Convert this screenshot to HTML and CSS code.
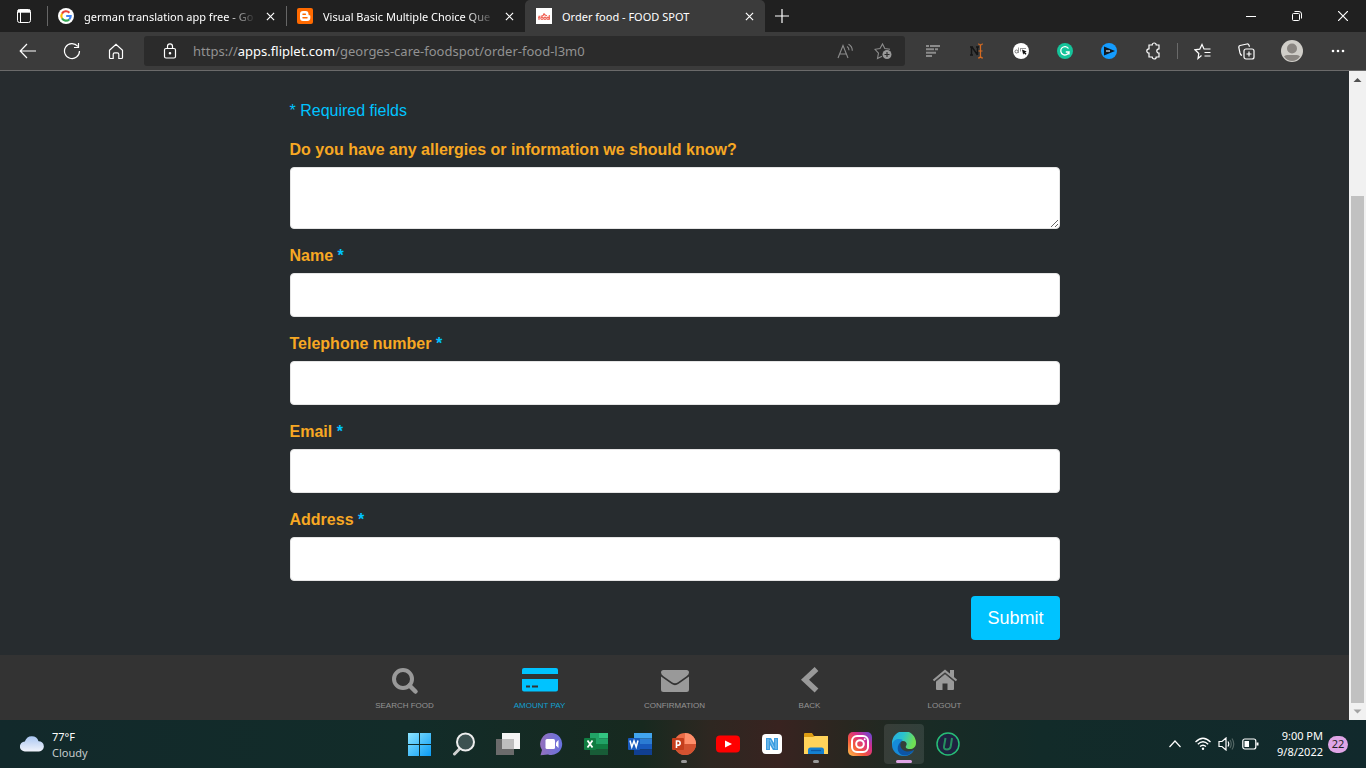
FILE: index.html
```html
<!DOCTYPE html>
<html lang="en">
<head>
<meta charset="utf-8">
<title>Order food - FOOD SPOT</title>
<meta name="viewport" content="width=device-width, initial-scale=1">
<link rel="stylesheet" href="styles.css">
</head>
<body>
<header class="browser">
  <div class="tabstrip">
    <button class="tab-menu" aria-label="Tab actions">
      <svg width="16" height="16" viewBox="0 0 16 16" fill="none" stroke="#fff"><rect x="1.5" y="1.5" width="13" height="13" rx="2"/><path d="M2 3.2h12" stroke-width="3"/><path d="M4.5 4v10"/></svg>
    </button>
    <div class="tab">
      <svg class="favicon" viewBox="0 0 16 16"><circle cx="8" cy="8" r="8" fill="#fff"/><g fill="none" stroke-width="2.1"><path d="M11.4 4.7A4.7 4.7 0 0 0 4 5.6" stroke="#ea4335"/><path d="M4 5.6a4.7 4.7 0 0 0 0 4.8" stroke="#fbbc05"/><path d="M4 10.4a4.7 4.7 0 0 0 7.2 1" stroke="#34a853"/><path d="M11.2 11.4A4.7 4.7 0 0 0 12.7 8H8.2" stroke="#4285f4"/></g></svg>
      <button class="tab-title fade">german translation app free - Go</button>
      <button class="tab-close" aria-label="Close tab"><svg width="9" height="9" viewBox="0 0 10 10"><path d="M1 1l8 8M9 1L1 9" stroke="#fff" stroke-width="1.3"/></svg></button>
    </div>
    <div class="tab">
      <svg class="favicon" viewBox="0 0 16 16"><rect width="16" height="16" rx="2" fill="#ff6a00"/><path d="M3 6a3 3 0 0 1 3-3h2.5a3 3 0 0 1 3 3c0 1 .3 1.200 1 1.200s.8.500.8 1V10a3 3 0 0 1-3 3H6a3 3 0 0 1-3-3z" fill="#fff"/><path d="M6 6.200h2.400M6 9.800h4" stroke="#ff6a00" stroke-width="1.500" stroke-linecap="round"/></svg>
      <button class="tab-title fade">Visual Basic Multiple Choice Que</button>
      <button class="tab-close" aria-label="Close tab"><svg width="9" height="9" viewBox="0 0 10 10"><path d="M1 1l8 8M9 1L1 9" stroke="#fff" stroke-width="1.3"/></svg></button>
    </div>
    <div class="tab active">
      <svg class="favicon" viewBox="0 0 16 16"><path fill="#fff" d="M0 0h16v16H0z"/><g fill="none" stroke="#ef5f52" stroke-width="1.100"><path d="M3 12V8.200h1.500M2 9.700h2.200"/><circle cx="6" cy="10.300" r="1.200"/><circle cx="9" cy="10.300" r="1.200"/><circle cx="12" cy="10.300" r="1.200"/><path d="M13.300 7v4.700M5 8.300q3-.3 3-3 .5 2 3 2.500"/></g></svg>
      <button class="tab-title">Order food - FOOD SPOT</button>
      <button class="tab-close" aria-label="Close tab"><svg width="9" height="9" viewBox="0 0 10 10"><path d="M1 1l8 8M9 1L1 9" stroke="#fff" stroke-width="1.3"/></svg></button>
    </div>
    <button class="new-tab" aria-label="New tab"><svg width="14" height="14" viewBox="0 0 14 14"><path d="M7 0v14M0 7h14" stroke="#fff" stroke-width="1.200"/></svg></button>
    <div class="window-controls">
      <button aria-label="Minimize"><svg width="10" height="10" viewBox="0 0 10 10"><path d="M0 5.500h10" stroke="#fff"/></svg></button>
      <button aria-label="Restore"><svg width="10" height="10" viewBox="0 0 10 10" fill="none" stroke="#fff"><rect x=".5" y="2.500" width="7" height="7" rx="1"/><path d="M2.500.5H7A2.500 2.500 0 0 1 9.500 3v4.500"/></svg></button>
      <button aria-label="Close"><svg width="10" height="10" viewBox="0 0 10 10"><path d="M0 0l10 10M10 0L0 10" stroke="#fff" stroke-width="1.200"/></svg></button>
    </div>
  </div>
  <div class="toolbar">
    <div class="tools">
      <button aria-label="Back"><svg width="18" height="16" viewBox="0 0 18 16" fill="none" stroke="#fff" stroke-width="1.200"><path d="M17 8H1.500M8 1L1.200 8 8 15"/></svg></button>
      <button aria-label="Refresh"><svg width="18" height="18" viewBox="0 0 18 18" fill="none" stroke="#fff" stroke-width="1.200"><path d="M16.500 9A7.500 7.500 0 1 1 14.800 4.300M15.500 1v4.500H11"/></svg></button>
      <button aria-label="Home"><svg width="16" height="17" viewBox="0 0 16 17" fill="none" stroke="#fff" stroke-width="1.200"><path d="M1.500 7.300L8 1.200l6.500 6.100v7.200a1 1 0 0 1-1 1h-2.700v-4.200a1.500 1.500 0 0 0-1.500-1.500H6.700a1.500 1.500 0 0 0-1.500 1.500v4.200H2.500a1 1 0 0 1-1-1z"/></svg></button>
    </div>
    <div class="address-bar">
      <svg width="14" height="16" viewBox="0 0 14 16" fill="none" stroke="#fff" stroke-width="1.200"><rect x="1.500" y="5.500" width="11" height="9.500" rx="1.500"/><path d="M4.500 5.500V3.300a2.500 2.500 0 0 1 5 0v2.200"/><circle cx="7" cy="10.200" r=".7" fill="#fff"/></svg>
      <div class="url" role="textbox" aria-label="Address and search bar" contenteditable="true" spellcheck="false">https://<b>apps.fliplet.com</b>/georges-care-foodspot/order-food-l3m0</div>
      <button aria-label="Read aloud"><svg width="17" height="16" viewBox="0 0 17 16" fill="none" stroke="#8c8c8c" stroke-width="1.100"><path d="M1 15L6 2.500 11 15M2.600 11h6.800M10 3.500q2 1.200 2 3.800M11.500 1.200q3.800 2 3.800 6.500"/></svg></button>
      <button aria-label="Add to favorites"><svg width="18" height="18" viewBox="0 0 18 18" fill="none" stroke="#8c8c8c" stroke-width="1.100"><path d="M8 14.200L3.500 16.500l1-5.300L1 7.300l5-.8L8.500 2l2.300 4.500 5.200.8"/><circle cx="13" cy="12.500" r="4.500" fill="#999" stroke="none"/><path d="M13 10v5M10.500 12.500h5" stroke="#2b2b2b"/></svg></button>
    </div>
    <div class="tools">
      <button aria-label="Reading list extension"><svg width="14" height="12" viewBox="0 0 14 12" stroke="#8b8b8b" stroke-width="2"><path d="M0 1h3M4 1h10M0 4.300h8M9 4.300h3M0 7.700h10M0 11h6"/></svg></button>
      <button aria-label="Text cursor extension"><svg width="16" height="16" viewBox="0 0 16 16" fill="none"><path d="M1 4h3M7 4h3M2.500 4v8M1 12h3M8.500 4v8M3 4l5.500 8" stroke="#151515" stroke-width="1.500"/><path d="M9 1q2.500 0 2.500 2v10q0 2-2.500 2M14 1q-2.500 0-2.500 2m0 10q0 2 2.500 2M9.500 8h4" stroke="#d56b22" stroke-width="1.200"/></svg></button>
      <button aria-label="Selection extension"><svg width="16" height="16" viewBox="0 0 16 16"><circle cx="8" cy="8" r="8" fill="#fff"/><circle cx="3.500" cy="8.500" r="1.500" fill="none" stroke="#777"/><path d="M5.500 4.500v5.500M7 5.500h6M7.500 5.500v3" stroke="#999"/><path d="M9 6.500l4.700 2-1.600.8 1.400 1.500-1 .9-1.500-1.500-.8 1.500z" fill="#111"/></svg></button>
      <button aria-label="Grammar extension"><svg width="16" height="16" viewBox="0 0 16 16" fill="none" stroke="#fff" stroke-width="1.300"><circle cx="8" cy="8" r="8" fill="#15c39a" stroke="none"/><path d="M11.500 5.500A4.200 4.200 0 1 0 12 9H8.800M12 9v2.500"/></svg></button>
      <button aria-label="Video extension"><svg width="16" height="16" viewBox="0 0 16 16"><circle cx="8" cy="8" r="8" fill="#149cff"/><path d="M3 3.500l11 4.500-11 4.500z" fill="#101820"/><path d="M5 7h4v2H5z" fill="#8995a2"/></svg></button>
      <button aria-label="Extensions"><svg width="16" height="18" viewBox="0 0 16 18" fill="none" stroke="#fff" stroke-width="1.200"><path d="M4 3h3.200a2 2 0 0 1 4 0H14v3.800a2.200 2.200 0 0 0 0 4.400V15h-2.800a2 2 0 0 1-4 0H4v-3.800a2.200 2.200 0 1 1 0-4.400z"/></svg></button>
    </div>
    <span class="divider"></span>
    <div class="tools">
      <button aria-label="Favorites"><svg width="17" height="17" viewBox="0 0 17 17" fill="none" stroke="#fff" stroke-width="1.200"><path d="M7.500 12.500L4 15.500l.8-5L1 6.800l4.800-.7L8 1.500l2 4.500h6.500M10.500 9.500h6M10.500 13h6"/></svg></button>
      <button aria-label="Collections"><svg width="17" height="17" viewBox="0 0 17 17" fill="none" stroke="#fff" stroke-width="1.200"><rect x="6" y="6" width="10" height="10" rx="2"/><path d="M11 8.500v5M8.500 11h5M4 12.500Q2.500 12 2 10L.8 4.500Q.6 3 2 2.500L9 1q1.500-.2 2 1.200l.5 1.600"/></svg></button>
    </div>
    <div class="tools profile">
      <button aria-label="Profile"><svg width="22" height="22" viewBox="0 0 22 22"><circle cx="11" cy="11" r="11" fill="#d0cec9"/><circle cx="11" cy="8.500" r="5" fill="#8a8682"/><path d="M3 16.500q1-1.500 3-1.500h10q2 0 3 1.500a9.500 9.500 0 0 1-16 0z" fill="#8a8682"/></svg></button>
      <button aria-label="Settings and more"><svg width="14" height="4" viewBox="0 0 14 4" fill="#fff"><circle cx="2" cy="2" r="1.300"/><circle cx="7" cy="2" r="1.300"/><circle cx="12" cy="2" r="1.300"/></svg></button>
    </div>
  </div>
</header>

<div class="viewport">
  <div class="app">
    <main class="content">
      <form class="order-form">
        <p class="required-note">* Required fields</p>
        <div class="field"><label for="allergies">Do you have any allergies or information we should know?</label><textarea id="allergies"></textarea></div>
        <div class="field"><label for="name">Name <span class="star">*</span></label><input id="name" type="text" required></div>
        <div class="field"><label for="phone">Telephone number <span class="star">*</span></label><input id="phone" type="tel" required></div>
        <div class="field"><label for="email">Email <span class="star">*</span></label><input id="email" type="email" required></div>
        <div class="field"><label for="address">Address <span class="star">*</span></label><input id="address" type="text" required></div>
        <button class="submit" type="submit">Submit</button>
      </form>
    </main>
    <nav class="bottom-nav">
      <a href="#search"><svg width="28" height="28" viewBox="0 0 28 28" fill="none" stroke="currentColor"><circle cx="12" cy="12" r="9" stroke-width="4"/><path d="M18.500 18.500l6 6" stroke-width="4.500" stroke-linecap="round"/></svg><span>SEARCH FOOD</span></a>
      <a href="#pay" class="current"><svg width="36" height="28" viewBox="0 0 36 28" fill="currentColor"><path d="M2 1h32a2 2 0 0 1 2 2v4H0V3a2 2 0 0 1 2-2zM0 12h36v10.500a2 2 0 0 1-2 2H2a2 2 0 0 1-2-2z"/><path d="M4 19.500h4M10 19.500h6" stroke="#333" stroke-width="2"/></svg><span>AMOUNT PAY</span></a>
      <a href="#confirmation"><svg width="28" height="28" viewBox="0 0 28 28" fill="currentColor"><path d="M2.500 3h23A2.500 2.500 0 0 1 28 5.500q0 2-2.500 3.700l-8.500 6q-3 2.200-6 0l-8.500-6Q0 7.500 0 5.500A2.500 2.500 0 0 1 2.500 3z"/><path d="M0 9.500l10.300 7.300q3.700 2.700 7.400 0L28 9.500v13a2.500 2.500 0 0 1-2.500 2.500h-23A2.500 2.500 0 0 1 0 22.500z"/></svg><span>CONFIRMATION</span></a>
      <a href="#back"><svg width="28" height="28" viewBox="0 0 28 28" fill="none" stroke="currentColor" stroke-width="5.500" stroke-linejoin="miter"><path d="M20.500 2L9 12.700 20.500 23.500"/></svg><span>BACK</span></a>
      <a href="#logout"><svg width="28" height="28" viewBox="0 0 28 28" fill="currentColor"><path d="M14 6.500l9 7.500v8a1 1 0 0 1-1 1h-5.500v-6.500h-5V23H6a1 1 0 0 1-1-1v-8z"/><path d="M2.500 13.500L14 4l11.500 9.500" fill="none" stroke="currentColor" stroke-width="2.200"/><path d="M19 3h4v9l-4-3.500z"/><path d="M5 14.200l9-7.400 9 7.400" fill="none" stroke="#333" stroke-width=".8"/></svg><span>LOGOUT</span></a>
    </nav>
  </div>
  <div class="scrollbar" aria-hidden="true">
    <svg width="17" height="17" viewBox="0 0 17 17"><path d="M4.500 11L8.500 7l4 4z" fill="#505050"/></svg>
    <div class="track"><div class="thumb"></div></div>
    <svg width="17" height="17" viewBox="0 0 17 17"><path d="M4.500 6.500h8l-4 4z" fill="#a3a3a3"/></svg>
  </div>
</div>

<footer class="taskbar">
  <button class="weather">
    <svg width="24" height="16" viewBox="0 0 24 16"><defs><linearGradient id="cloud" x2="0" y2="1"><stop stop-color="#a9c6f2"/><stop offset="1" stop-color="#f0f3fb"/></linearGradient></defs><path d="M5 15.500a5 5 0 0 1-.2-10Q7 0 12 .3q5 0 6.500 5a5.100 5.100 0 0 1 .5 10.200z" fill="url(#cloud)"/></svg>
    <span class="weather-text"><span>77°F</span><span class="sky">Cloudy</span></span>
  </button>
  <div class="apps">
    <button aria-label="Start"><svg width="24" height="24" viewBox="0 0 24 24"><defs><linearGradient id="win" x2="1" y2="1"><stop stop-color="#8ce4ff"/><stop offset="1" stop-color="#0a9cf5"/></linearGradient></defs><path d="M0 1h11v11H0zm12 0h11v11H12zM0 13h11v11H0zm12 0h11v11H12z" fill="url(#win)"/></svg></button>
    <button aria-label="Search"><svg width="24" height="24" viewBox="0 0 24 24" fill="none" stroke="#eee" stroke-linecap="round"><path d="M7.500 17L2.500 22" stroke-width="3" stroke="#d0d0d0"/><circle cx="13.500" cy="10" r="8.500" stroke-width="2" fill="#3c5150"/></svg></button>
    <button aria-label="Task view"><svg width="24" height="24" viewBox="0 0 24 24"><path d="M0 7h18v16H0z" fill="#6b6b6b"/><path d="M6 1h18v16H6z" fill="#f4f4f4"/><path d="M6 7h12v10H6z" fill="#bdbdbd"/></svg></button>
    <button aria-label="Chat"><svg width="24" height="24" viewBox="0 0 24 24"><defs><linearGradient id="chat" x2="1"><stop stop-color="#9370bd"/><stop offset="1" stop-color="#6872df"/></linearGradient></defs><path d="M12 1A11 11 0 1 1 8 22.500L.500 23.200 2 18A11 11 0 0 1 12 1z" fill="url(#chat)"/><rect x="5.500" y="7" width="9.500" height="10" rx="1.500" fill="#fff"/><path d="M16 10.500L18.500 8v8L16 13.500z" fill="#fff"/></svg></button>
    <button aria-label="Excel"><svg width="24" height="24" viewBox="0 0 24 24"><path d="M6 1h9v11H6z" fill="#21a366"/><path d="M15 1h9v5.500h-9z" fill="#33c481"/><path d="M15 6.500h9V12h-9z" fill="#21a366"/><path d="M6 12h9v5H6z" fill="#107c41"/><path d="M15 12h9v5h-9z" fill="#107c41"/><path d="M6 17h18v6H6z" fill="#185c37"/><rect y="6" width="12" height="12" rx="1" fill="#107c41"/><path d="M3.500 8.500l5 7M8.500 8.500l-5 7" stroke="#fff" stroke-width="1.800"/></svg></button>
    <button aria-label="Word"><svg width="24" height="24" viewBox="0 0 24 24"><path d="M6 1h18v5.500H6z" fill="#41a5ee"/><path d="M6 6.500h18V12H6z" fill="#2b7cd3"/><path d="M6 12h18v5.500H6z" fill="#185abd"/><path d="M6 17.500h18V23H6z" fill="#103f91"/><rect y="6" width="12" height="12" rx="1" fill="#185abd"/><path d="M2 8.500l1.800 6.500L6 9l2.200 6L10 8.500" fill="none" stroke="#fff" stroke-width="1.500"/></svg></button>
    <button aria-label="PowerPoint" class="running"><svg width="24" height="24" viewBox="0 0 24 24"><circle cx="13" cy="12" r="11" fill="#ed6c47"/><path d="M13 1a11 11 0 0 1 11 11H13z" fill="#ff8f6b"/><path d="M2 12h22a11 11 0 0 1-22 0z" fill="#d35230"/><rect y="6" width="12" height="12" rx="1" fill="#c43e1c"/><path d="M4.500 16V9H6a2 2 0 0 1 0 4.300H4.500" fill="none" stroke="#fff" stroke-width="1.600"/></svg></button>
    <button aria-label="YouTube"><svg width="24" height="24" viewBox="0 0 24 24"><rect y="3.500" width="24" height="17" rx="4" fill="#f00"/><path d="M9 8.500l7 3.500-7 3.500z" fill="#fff"/></svg></button>
    <button aria-label="N app"><svg width="24" height="24" viewBox="0 0 24 24"><rect x="2" y="2" width="20" height="20" rx="4" fill="#fff"/><path d="M6 6h5l3 5V6h4v12h-5l-3-5v5H6z" fill="#3d9de0"/><path d="M8 7v10M16 7v10M10 8l4 8" stroke="#a6d5f5" stroke-width=".8"/></svg></button>
    <button aria-label="File Explorer" class="running"><svg width="24" height="24" viewBox="0 0 24 24"><path d="M0 2a1 1 0 0 1 1-1h7l2 3h13a1 1 0 0 1 1 1v3H0z" fill="#dc9c12"/><path d="M0 5h9l2-1h13v18H0z" fill="#ffd35a"/><path d="M4 22v-4a2.500 2.500 0 0 1 2.500-2.500h11A2.500 2.500 0 0 1 20 18v4z" fill="#1480d0"/><path d="M7 18.500h10" stroke="#0c59a4" stroke-width="1.300"/></svg></button>
    <button aria-label="Instagram"><svg width="24" height="24" viewBox="0 0 24 24" fill="none" stroke="#fff" stroke-width="2"><defs><linearGradient id="insta" x1="0" y1="1" x2="1" y2="0"><stop stop-color="#ffc44d"/><stop offset=".35" stop-color="#f4593c"/><stop offset=".65" stop-color="#d52d8b"/><stop offset="1" stop-color="#5b4de0"/></linearGradient></defs><rect width="24" height="24" rx="5" fill="url(#insta)" stroke="none"/><rect x="4" y="4" width="16" height="16" rx="5"/><circle cx="12" cy="12" r="3.800"/><circle cx="16.700" cy="7.300" r="1" fill="#fff" stroke="none"/></svg></button>
    <button aria-label="Microsoft Edge" class="focused"><svg width="24" height="24" viewBox="0 0 24 24"><defs><linearGradient id="edge" x2="1" y2=".3"><stop stop-color="#25a8e5"/><stop offset=".5" stop-color="#2bc4cc"/><stop offset="1" stop-color="#70df53"/></linearGradient></defs><path d="M0 11A12 12 0 0 1 24 11c0 4-3 6-6 6-3 0-5-1-4-3 1.500-2 .5-5-3-5-5 0-9 3-11 5z" fill="url(#edge)"/><path d="M0 13C1 7 7 6 11 8c-4 2-5 9 0 12 4 2 8 1 11-2-2 4-6 6-10 6C5 24 0 19 0 13z" fill="#168bd8"/><path d="M10 9c-3 3-2 8 3 10 3 1 6 .5 9-1-3 5-9 7-13 4.500-5-3-4-10.500 1-13.500z" fill="#0d55a5"/></svg></button>
    <button aria-label="Uninstaller"><svg width="24" height="24" viewBox="0 0 24 24" fill="none"><circle cx="12" cy="12" r="11" fill="#1e2340" stroke="#27bd77" stroke-width="1.500"/><path d="M9.500 6L8 14.500q-.5 3 3 3 3 0 3.700-3L16 6" stroke="#26915f" stroke-width="2"/></svg></button>
  </div>
  <div class="tray">
    <button aria-label="Show hidden icons"><svg width="12" height="8" viewBox="0 0 12 8" fill="none" stroke="#fff" stroke-width="1.200"><path d="M.5 7L6 1l5.500 6"/></svg></button>
    <button class="status" aria-label="Network, volume and battery">
      <svg width="16" height="14" viewBox="0 0 16 14" fill="none" stroke="#fff" stroke-width="1.300"><path d="M.5 5Q8-2.500 15.500 5M2.800 7.300q5.200-5 10.400 0M5 9.600q3-2.700 6 0"/><circle cx="8" cy="11.800" r="1.200" fill="#fff" stroke="none"/></svg>
      <svg width="17" height="14" viewBox="0 0 17 14" fill="none" stroke="#fff" stroke-width="1.200"><path d="M1 4.500h3L8 1v12L4 9.500H1zM10 4.500q1.500 2.500 0 5"/><path d="M12 3q2.500 4 0 8M14 1.500q3.500 5.500 0 11" stroke="#536664"/></svg>
      <svg width="17" height="12" viewBox="0 0 17 12" fill="none" stroke="#fff" stroke-width="1.200"><rect x=".8" y="1" width="13" height="10" rx="2"/><path d="M2.500 3H7v6H2.500z" fill="#fff" stroke="none"/><path d="M15.500 4.500v3" stroke-width="2"/></svg>
    </button>
    <button class="clock"><span class="clock-text"><span>9:00 PM</span><span>9/8/2022</span></span><span class="count">22</span></button>
  </div>
</footer>
</body>
</html>
```
FILE: styles.css
```css
* { box-sizing: border-box; }

body {
  margin: 0;
  height: 100vh;
  display: flex;
  flex-direction: column;
  overflow: hidden;
  background: #272c2f;
  font-family: "Liberation Sans", Arial, sans-serif;
}

button {
  margin: 0;
  padding: 0;
  border: 0;
  background: none;
  color: inherit;
  font: inherit;
}

svg { display: block; flex: none; }

/* Browser chrome */
.browser, .taskbar {
  flex: none;
  color: #fff;
  font-family: "Noto Sans", "Open Sans", sans-serif;
}

.browser { border-bottom: 1px solid #6a6a6a; background: #3b3b3b; }

.tabstrip { display: flex; height: 32px; background: #202020; font-size: 11px; }

.tab-menu { width: 47px; display: grid; place-items: center; }

.tab {
  flex: 0 1 239px;
  display: flex;
  align-items: center;
  min-width: 0;
  padding: 0 11px 0 10px;
  border-left: 1px solid transparent;
  border-image: linear-gradient(transparent 20%, #666 20%, #666 80%, transparent 80%) 1;
}

.tab.active {
  flex-basis: 240px;
  border-image: none;
  border-radius: 5px 5px 0 0;
  background: #3b3b3b;
}

.favicon { width: 16px; height: 16px; margin-right: 10px; }

.tab-title {
  flex: 1;
  min-width: 0;
  overflow: hidden;
  white-space: nowrap;
  text-align: left;
}

.fade {
  -webkit-mask-image: linear-gradient(to right, #000 calc(100% - 28px), transparent);
  mask-image: linear-gradient(to right, #000 calc(100% - 28px), transparent);
}

.tab-close { width: 17px; margin-left: 2px; display: grid; place-items: end; }

.new-tab { width: 34px; display: grid; place-items: center; }

.window-controls { display: flex; margin-left: auto; }

.window-controls button { width: 46px; display: grid; place-items: center; }

.toolbar { display: flex; align-items: center; height: 38px; padding: 0 6px; }

.tools { display: flex; }

.tools button { width: 44px; height: 30px; display: grid; place-items: center; }

.profile { gap: 2px; margin-left: 2px; }

.divider { width: 1px; height: 16px; margin: 0 2px; background: #6a6a6a; }

.address-bar {
  flex: 1;
  min-width: 0;
  height: 30px;
  margin: 0 6px;
  padding: 0 13px 0 19px;
  display: flex;
  align-items: center;
  border-radius: 3px;
  background: #2b2b2b;
}

.url {
  flex: 1;
  min-width: 0;
  margin-left: 16px;
  overflow: hidden;
  white-space: nowrap;
  font-size: 13px;
  color: #929292;
}

.url b { font-weight: 400; color: #fff; }

.address-bar button { margin-left: 20px; }

/* Page */
.viewport { flex: 1; min-height: 0; display: flex; }

.app { flex: 1; min-width: 0; display: flex; flex-direction: column; }

.content { flex: 1; min-height: 0; overflow: hidden; }

.order-form {
  max-width: 770px;
  margin: 0 auto;
  padding-top: 28px;
  display: flex;
  flex-direction: column;
  font-size: 16px;
  line-height: 24px;
}

.required-note { margin: 0 0 15px; color: #00c3ff; }

.field { display: flex; flex-direction: column; gap: 5px; margin-bottom: 15px; }

.field label { font-weight: 700; color: #f7a823; }

.field .star { color: #00c3ff; }

.field input, .field textarea {
  width: 100%;
  height: 44px;
  margin: 0;
  padding: 6px 12px;
  border: 1px solid #e5e5e5;
  border-radius: 4px;
  background: #fff;
  font: inherit;
}

.field textarea { height: 62px; resize: vertical; }

.submit {
  align-self: flex-end;
  padding: 10px 16px;
  border-radius: 4px;
  background: #00c3ff;
  color: #fff;
  font-size: 18px;
}

.bottom-nav {
  flex: none;
  display: flex;
  justify-content: center;
  height: 65px;
  background: #333;
}

.bottom-nav a {
  flex: 0 1 135px;
  display: flex;
  flex-direction: column;
  align-items: center;
  gap: 5px;
  padding-top: 12px;
  color: #999;
  text-decoration: none;
}

.bottom-nav span { font-size: 8px; line-height: 12px; color: #949494; }

.bottom-nav .current { color: #00c3ff; }

.bottom-nav .current span { color: #10a0cf; }

.scrollbar { flex: none; display: flex; flex-direction: column; width: 17px; background: #f1f1f1; }

.track { flex: 1; display: flex; flex-direction: column; justify-content: flex-end; padding: 0 2px; }

.thumb { height: 82.5%; background: #c1c1c1; }

/* Taskbar */
.taskbar {
  display: grid;
  grid-template-columns: 1fr auto 1fr;
  align-items: center;
  height: 48px;
  padding-left: 2px;
  background: linear-gradient(to right, #12292b, #122c29 30%, #17291f 47%, #2e2721 52%, #382320 57%, #292720 62%, #192b25 68%, #122b29 76%, #11292c);
  font-size: 11px;
  line-height: 16px;
}

.weather { display: flex; align-items: center; gap: 8px; padding-left: 18px; text-align: left; }

.weather-text, .clock-text { display: flex; flex-direction: column; }

.weather-text { padding-top: 2px; }

.sky { color: #c5cccc; }

.apps { display: flex; }

.apps button {
  position: relative;
  width: 44px;
  height: 48px;
  display: grid;
  place-items: center;
}

.running::after, .focused::after {
  content: "";
  position: absolute;
  bottom: 5px;
  left: 50%;
  width: 6px;
  height: 3px;
  margin-left: -3px;
  border-radius: 2px;
  background: #999;
}

.focused::after { width: 16px; margin-left: -8px; background: #dfa5e6; }

.apps .focused::before {
  content: "";
  position: absolute;
  inset: 4px 2px;
  border-radius: 4px;
  background: #ffffff1a;
}

.focused svg { position: relative; }

.tray { display: flex; align-items: center; justify-content: flex-end; padding-right: 18px; }

.status { display: flex; align-items: center; gap: 7px; margin: 0 18px 0 14px; }

.clock { display: flex; align-items: center; gap: 5px; text-align: right; }

.count {
  width: 20px;
  height: 17px;
  border-radius: 9px;
  background: #dfa5e6;
  color: #222;
  text-align: center;
}
```
